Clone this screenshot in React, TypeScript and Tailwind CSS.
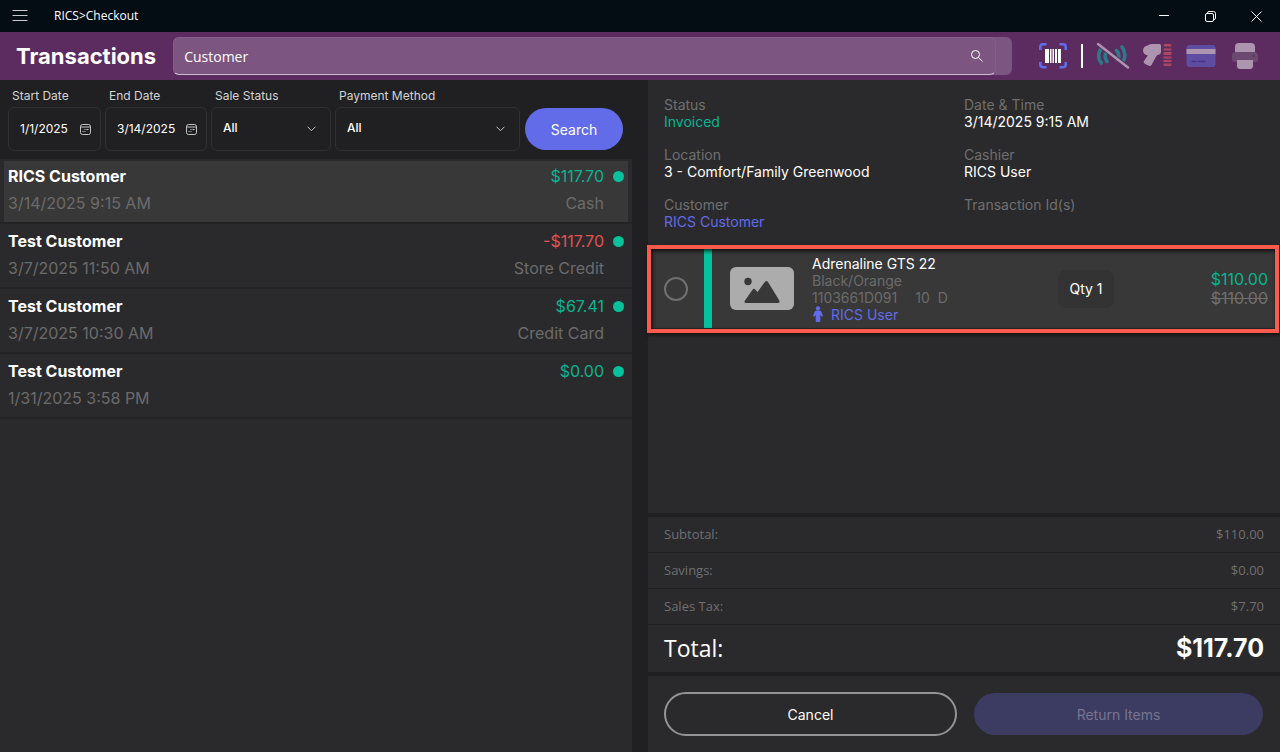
import type { ReactNode } from "react";

type Transaction = {
  id: number;
  customer: string;
  date: string;
  amount: string;
  method: string;
  refund?: boolean;
};

const transactions: Transaction[] = [
  { id: 1, customer: "RICS Customer", date: "3/14/2025 9:15 AM", amount: "$117.70", method: "Cash" },
  { id: 2, customer: "Test Customer", date: "3/7/2025 11:50 AM", amount: "-$117.70", method: "Store Credit", refund: true },
  { id: 3, customer: "Test Customer", date: "3/7/2025 10:30 AM", amount: "$67.41", method: "Credit Card" },
  { id: 4, customer: "Test Customer", date: "1/31/2025 3:58 PM", amount: "$0.00", method: "" },
];

const totals = [
  { label: "Subtotal:", value: "$110.00" },
  { label: "Savings:", value: "$0.00" },
  { label: "Sales Tax:", value: "$7.70" },
];

function TitleBar() {
  return (
    <div className="flex h-8 shrink-0 items-center bg-[#040d14] pr-px text-white">
      <button type="button" aria-label="Menu" className="flex h-8 w-10 items-center justify-center">
        <svg width="16" height="12" viewBox="0 0 16 12" stroke="#c8c8cc" strokeWidth="1">
          <path d="M.5.5h15M.5 5.5h15M.5 10.5h15" />
        </svg>
      </button>
      <span className="ml-[14px] flex-1 font-['Open_Sans',sans-serif] text-[12px]">RICS&gt;Checkout</span>
      <button type="button" aria-label="Minimize" className="flex h-8 w-[46px] items-center justify-center">
        <svg width="10" height="10" viewBox="0 0 10 10" stroke="#fff" strokeWidth="1">
          <path d="M0 4.5h10" />
        </svg>
      </button>
      <button type="button" aria-label="Restore" className="flex h-8 w-[46px] items-center justify-center">
        <svg width="11" height="11" viewBox="0 0 11 11" fill="none" stroke="#fff" strokeWidth="1">
          <rect x=".5" y="2.5" width="8" height="8" rx="1.5" />
          <path d="M2.5 2.5V2A1.5 1.5 0 0 1 4 .5h4.5A2 2 0 0 1 10.5 2.5V7A1.5 1.5 0 0 1 9 8.5h-.5" />
        </svg>
      </button>
      <button type="button" aria-label="Close" className="flex h-8 w-[46px] items-center justify-center">
        <svg width="11" height="11" viewBox="0 0 11 11" stroke="#fff" strokeWidth="1">
          <path d="M.5.5l10 10M10.5.5l-10 10" />
        </svg>
      </button>
    </div>
  );
}

function DeviceIcons() {
  return (
    <div className="flex items-center">
      <button type="button" aria-label="Scan barcode">
        <svg width="30" height="28" viewBox="0 0 30 28" fill="none">
          <path
            d="M2.3 8V5q0-2.700 2.700-2.700H8.500M21.500 2.300H25q2.700 0 2.700 2.700V8M27.700 20v2.500q0 2.700-2.700 2.700h-3.500M8.500 25.200H5q-2.700 0-2.700-2.700V20"
            stroke="#626be8"
            strokeWidth="2.600"
          />
          <path d="M7 7h4v14H7zM12 7h1.500v14H12zM14.500 7h1.500v14h-1.500zM17 7h2v14h-2zM20 7h3v14h-3z" fill="#fff" />
        </svg>
      </button>
      <span className="ml-[13px] h-6 w-[2px] bg-white" />
      <svg className="ml-[13px]" width="34" height="28" viewBox="0 0 34 28" fill="none">
        <g stroke="#2c7b88" strokeWidth="3.600" strokeLinecap="round">
          <path d="M4.500 7.500c-2.600 4-2.600 9.500.8 13.500" />
          <path d="M9.500 12c-.8 3-.3 5 1.500 7.500" />
          <path d="M20.500 8.500c2.800 3 2.800 6.500 1.300 10" />
          <path d="M26 5c3.600 5 3.600 11 .3 16" />
        </g>
        <path d="M1.500 1.500l31 24.500" stroke="#5c2b60" strokeWidth="4.500" />
        <path d="M2 2l30 23.500" stroke="#ad95b0" strokeWidth="2.500" strokeLinecap="round" />
      </svg>
      <svg className="ml-3" width="30" height="26" viewBox="0 0 30 26">
        <path
          d="M5.500 2.500Q7 1 10 1h7.500q1.500 0 1.500 1.500v6.500q0 2.500-2.500 2.800-1.500.2-2.500 2L9.500 22q-1 1.500-2.800.7L2.500 20.500Q1 19.500 2 18l3.800-5.500Q1 11.500 1 7.500 1 3.500 5.500 2.500z"
          fill="#ad95b0"
        />
        <path
          d="M21.500 2.500q0-1.500 1.500-1.500h5q1.500 0 1.500 1.500v1h-8zM21.500 5.500h8v2h-8zM21.500 9h8v3h-8zM21.500 13.500h8v2h-8zM21.500 17h8v2h-8zM21.500 20.500h8v1.500q0 1-1.500 1H23q-1.500 0-1.500-1z"
          fill="#ad4663"
        />
      </svg>
      <svg className="ml-[14px]" width="30" height="24" viewBox="0 0 30 24">
        <rect x=".5" y="1" width="29" height="22" rx="3" fill="#5f4da4" />
        <rect x=".5" y="5" width="29" height="5" fill="#ad95b0" />
        <path d="M6 17.500h3.500M12 17.500h7" stroke="#49357f" strokeWidth="1.500" strokeLinecap="round" />
      </svg>
      <svg className="ml-4" width="26" height="28" viewBox="0 0 26 28">
        <path d="M3 10V5q0-4 4-4h12q4 0 4 4v5z" fill="#ad95b0" />
        <path d="M4 10h18q4 0 4 4v3q0 3-3 3H3q-3 0-3-3v-3q0-4 4-4z" fill="#6b4a6f" />
        <circle cx="21.500" cy="14" r="1" fill="#52305a" />
        <path d="M5 18h16v6q0 3-3 3H8q-3 0-3-3z" fill="#ad95b0" />
      </svg>
    </div>
  );
}

function Header() {
  return (
    <header className="flex h-12 shrink-0 items-center bg-[#5c2b60] pr-[22px] pl-4">
      <h1 className="text-[22px] font-bold text-white">Transactions</h1>
      <div className="ml-[17px] flex h-[38px] flex-1 rounded-md bg-[#7c5681] pr-4">
        <div className="flex flex-1 items-center rounded-md border border-[#855f8a] border-b-[#cdbfd0]">
          <input
            type="text"
            aria-label="Search transactions"
            defaultValue="Customer"
            className="min-w-0 flex-1 bg-transparent pl-[10px] font-['Open_Sans',sans-serif] text-[14px] text-white outline-none"
          />
          <button type="button" aria-label="Search" className="mr-3 flex size-3">
            <svg width="12" height="12" viewBox="0 0 12 12" fill="none" stroke="#fff" strokeWidth="1">
              <circle cx="4.500" cy="4.500" r="4" />
              <path d="M7.500 7.500l4 4" />
            </svg>
          </button>
        </div>
      </div>
      <div className="ml-[26px]">
        <DeviceIcons />
      </div>
    </header>
  );
}

function DateField({ id, label, value, className }: { id: string; label: string; value: string; className: string }) {
  return (
    <div className={`flex flex-col ${className}`}>
      <label htmlFor={id} className="pl-1 text-[12px] leading-5 text-[#d4d4d4]">
        {label}
      </label>
      <div className="mt-px flex h-11 items-center rounded-md border border-[#303032] pr-[9px] pl-[11px]">
        <input
          id={id}
          type="text"
          defaultValue={value}
          className="min-w-0 flex-1 bg-transparent text-[12px] text-white outline-none"
        />
        <button type="button" aria-label={`Pick ${label}`}>
          <svg width="11" height="11" viewBox="0 0 11 11" fill="none" stroke="#c4c4c4">
            <rect x=".5" y=".5" width="10" height="10" rx="2" />
            <path d="M.5 3h10" />
            <path d="M4.500 5.500h1M6.500 5.500h2M2.500 7.500h1M4.500 7.500h1" />
          </svg>
        </button>
      </div>
    </div>
  );
}

function SelectField({ id, label, className }: { id: string; label: string; className: string }) {
  return (
    <div className={`flex flex-col ${className}`}>
      <label htmlFor={id} className="pl-1 text-[12px] leading-5 text-[#d4d4d4]">
        {label}
      </label>
      <div className="relative mt-px flex h-11">
        <select
          id={id}
          className="w-full appearance-none rounded-md border border-[#303032] bg-[#202022] pr-8 pb-[2px] pl-[11px] text-[12px] font-medium text-white"
        >
          <option>All</option>
        </select>
        <svg
          className="pointer-events-none absolute top-[19px] right-[15px]"
          width="9"
          height="6"
          viewBox="0 0 9 6"
          fill="none"
          stroke="#c4c4c4"
        >
          <path d="M.5.7l4 4 4-4" />
        </svg>
      </div>
    </div>
  );
}

function Filters() {
  return (
    <form className="flex items-end gap-1 bg-[#202022] pt-[6px] pr-[9px] pb-2 pl-2">
      <DateField id="start-date" label="Start Date" value="1/1/2025" className="w-[93px]" />
      <DateField id="end-date" label="End Date" value="3/14/2025" className="w-[102px]" />
      <SelectField id="sale-status" label="Sale Status" className="w-[120px]" />
      <SelectField id="payment-method" label="Payment Method" className="flex-1" />
      <button
        type="button"
        className="mb-px ml-px h-[42px] w-[98px] rounded-full bg-[#626be8] text-[14px] text-white"
      >
        Search
      </button>
    </form>
  );
}

function TransactionRow({ item, selected }: { item: Transaction; selected: boolean }) {
  return (
    <li className="border-b-2 border-[#232325]">
      <button
        type="button"
        className={`grid w-full grid-cols-[1fr_auto_auto] items-center gap-y-[2px] border-x-4 border-t-2 border-[#2a2a2c] pt-[3px] pb-[6px] pl-1 text-left text-[16px] leading-[25px] ${
          selected ? "bg-[#383838]" : "bg-[#2a2a2c]"
        }`}
      >
        <span className="font-bold text-white">{item.customer}</span>
        <span className={`text-right ${item.refund ? "text-[#e05353]" : "text-[#08b48f]"}`}>{item.amount}</span>
        <span className="mr-1 ml-[9px] size-[11px] rounded-full bg-[#04c29c]" />
        <span className="text-[#6b6b6b]">{item.date}</span>
        <span className="text-right text-[#6b6b6b]">{item.method || "\u00a0"}</span>
      </button>
    </li>
  );
}

function Detail({ label, children }: { label: string; children?: ReactNode }) {
  return (
    <div className="h-[50px] text-[14px] leading-[17px]">
      <dt className="text-[#6f6f6f]">{label}</dt>
      <dd className="text-white">{children}</dd>
    </div>
  );
}

function LineItem() {
  return (
    <div className="relative mt-[3px] flex h-[79px] items-center bg-[#383838] pr-3 pl-4">
      <input
        type="checkbox"
        aria-label="Select Adrenaline GTS 22"
        className="size-6 appearance-none rounded-full border-2 border-[#707070]"
      />
      <span className="ml-4 h-full w-2 bg-[#04c29c]" />
      <svg className="ml-[18px]" width="64" height="43" viewBox="0 0 64 43">
        <rect width="64" height="43" rx="6" fill="#acacac" />
        <circle cx="18" cy="14.500" r="3.700" fill="#383838" />
        <path
          d="M16 36q-2.500 0-1-2.500L22.500 22.800q1.500-2 3 0l2 2.200 7.300-10q1.700-2 3.200 0L49 33q1.500 3-1 3z"
          fill="#383838"
        />
      </svg>
      <div className="ml-[18px] flex-1 text-[14px] leading-[17px] text-[#6b6b6b]">
        <p className="text-white">Adrenaline GTS 22</p>
        <p>Black/Orange</p>
        <p className="flex">
          <span>1103661D091</span>
          <span className="ml-[18px]">10</span>
          <span className="ml-2">D</span>
        </p>
        <p className="flex items-center text-[#626be8]">
          <svg width="12" height="16" viewBox="0 0 12 16" fill="#626be8">
            <circle cx="6" cy="2.300" r="2.100" />
            <path d="M4.500 4.600h3q1.500 0 2 1.500l1.500 4-1.200.6-1.500-1.700V15q0 1-1 1H4.700q-1 0-1-1V9L2.200 10.700 1 10.100l1.500-4q.5-1.500 2-1.500z" />
          </svg>
          <a href="#" className="ml-[7px]">
            RICS User
          </a>
        </p>
      </div>
      <span className="flex h-[38px] w-[56px] items-center justify-center rounded-lg bg-[#333333] text-[14px] text-white">
        Qty 1
      </span>
      <div className="w-[154px] text-right text-[16px] leading-[19px]">
        <p className="text-[#08b48f]">$110.00</p>
        <p className="text-[#6f6f6f] line-through">$110.00</p>
      </div>
      {/* highlight frame, drawn just outside the row */}
      <div className="pointer-events-none absolute -top-1 right-px -bottom-[5px] -left-px border-4 border-[#fb5a4c] shadow-[1px_2px_4px_#0009,inset_1px_2px_4px_#000c]" />
    </div>
  );
}

function DetailPane() {
  return (
    <section className="flex min-w-0 flex-1 flex-col bg-[#2a2a2c]">
      <dl className="grid grid-cols-[300px_1fr] px-4 pt-4">
        <Detail label="Status">
          <span className="text-[#08b48f]">Invoiced</span>
        </Detail>
        <Detail label="Date & Time">3/14/2025 9:15 AM</Detail>
        <Detail label="Location">3 - Comfort/Family Greenwood</Detail>
        <Detail label="Cashier">RICS User</Detail>
        <Detail label="Customer">
          <a href="#" className="text-[#626be8]">
            RICS Customer
          </a>
        </Detail>
        <Detail label="Transaction Id(s)" />
      </dl>
      <LineItem />
      <div className="flex-1" />
      <dl className="border-y-4 border-[#202022]">
        {totals.map((row) => (
          <div
            key={row.label}
            className="flex h-9 items-center justify-between border-b border-[#202022] px-4 pt-px font-['Open_Sans',sans-serif] text-[13px] text-[#6f6f6f]"
          >
            <dt>{row.label}</dt>
            <dd>{row.value}</dd>
          </div>
        ))}
        <div className="flex h-[47px] items-center justify-between px-4 text-white">
          <dt className="font-['Open_Sans',sans-serif] text-[23px]">Total:</dt>
          <dd className="text-[25px] font-bold">$117.70</dd>
        </div>
      </dl>
      <div className="flex items-center gap-[17px] py-4 pr-[17px] pl-4 text-[14px]">
        <button type="button" className="h-11 flex-1 rounded-full border-2 border-[#949494] text-white">
          Cancel
        </button>
        <button type="button" disabled className="h-[42px] flex-1 rounded-full bg-[#3c3b62] text-[#77758f]">
          Return Items
        </button>
      </div>
    </section>
  );
}

export default function App() {
  return (
    <div className="flex h-screen flex-col bg-[#202022] font-['Inter',sans-serif]">
      <TitleBar />
      <Header />
      <main className="flex min-h-0 flex-1 gap-4">
        <section className="flex min-w-0 flex-1 flex-col bg-[#2a2a2c]">
          <Filters />
          <ul>
            {transactions.map((item) => (
              <TransactionRow key={item.id} item={item} selected={item.id === 1} />
            ))}
          </ul>
        </section>
        <DetailPane />
      </main>
    </div>
  );
}
